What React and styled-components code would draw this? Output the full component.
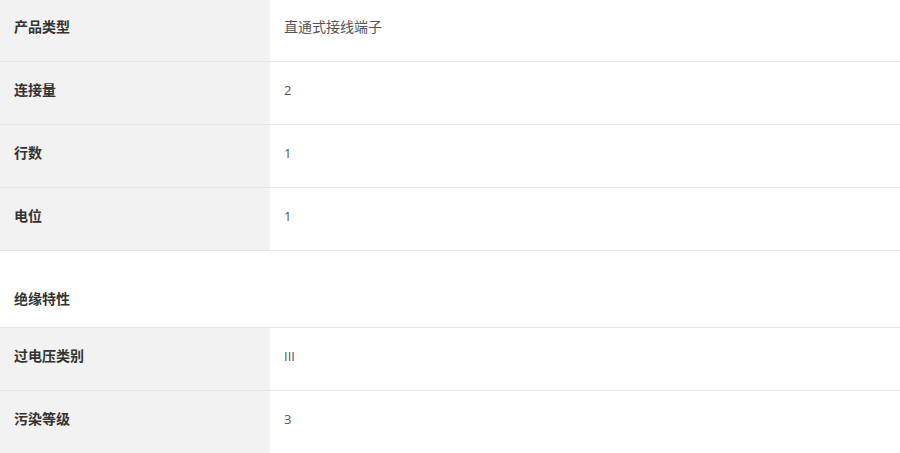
import React from "react";
import styled, { createGlobalStyle } from "styled-components";

const Global = createGlobalStyle`
  html, body { margin: 0; padding: 0; background: #fff; }
  body { font-family: "Open Sans", "Noto Sans CJK SC", sans-serif; }
`;

const Table = styled.div`
  width: 900px;
  margin-top: -1px;
  display: flex;
  flex-direction: column;
`;

const Row = styled.div`
  display: flex;
  border-bottom: 1px solid #e6e6e6;
`;

const Label = styled.div`
  width: 270px;
  box-sizing: border-box;
  background: #f2f2f2;
  padding: 17px 14px 25px;
  font-family: "Noto Sans CJK SC", sans-serif;
  font-weight: 700;
  font-size: 14px;
  line-height: 20px;
  color: #333;
`;

const Value = styled.div`
  flex: 1;
  padding: ${(p) => (p.$cjk ? "17px 14px 25px" : "18px 14px 24px")};
  font-family: ${(p) => (p.$cjk ? '"Noto Sans CJK SC", sans-serif' : '"Open Sans", "Noto Sans CJK SC", sans-serif')};
  font-size: ${(p) => (p.$cjk ? "14px" : "13px")};
  line-height: 20px;
  color: #555;
`;

const Section = styled.div`
  padding: 37px 14px 19px;
  border-bottom: 1px solid #e6e6e6;
  font-family: "Noto Sans CJK SC", sans-serif;
  font-weight: 700;
  font-size: 14px;
  line-height: 20px;
  color: #333;
`;

const groups = [
  {
    rows: [
      ["产品类型", "直通式接线端子", true],
      ["连接量", "2"],
      ["行数", "1"],
      ["电位", "1"],
    ],
  },
  {
    title: "绝缘特性",
    rows: [
      ["过电压类别", "III"],
      ["污染等级", "3"],
    ],
  },
];

export default function App() {
  return (
    <>
      <Global />
      <Table>
        {groups.map((g, gi) => (
          <React.Fragment key={gi}>
            {g.title && <Section>{g.title}</Section>}
            {g.rows.map(([k, v, cjk]) => (
              <Row key={k}>
                <Label>{k}</Label>
                <Value $cjk={cjk}>{v}</Value>
              </Row>
            ))}
          </React.Fragment>
        ))}
      </Table>
    </>
  );
}
